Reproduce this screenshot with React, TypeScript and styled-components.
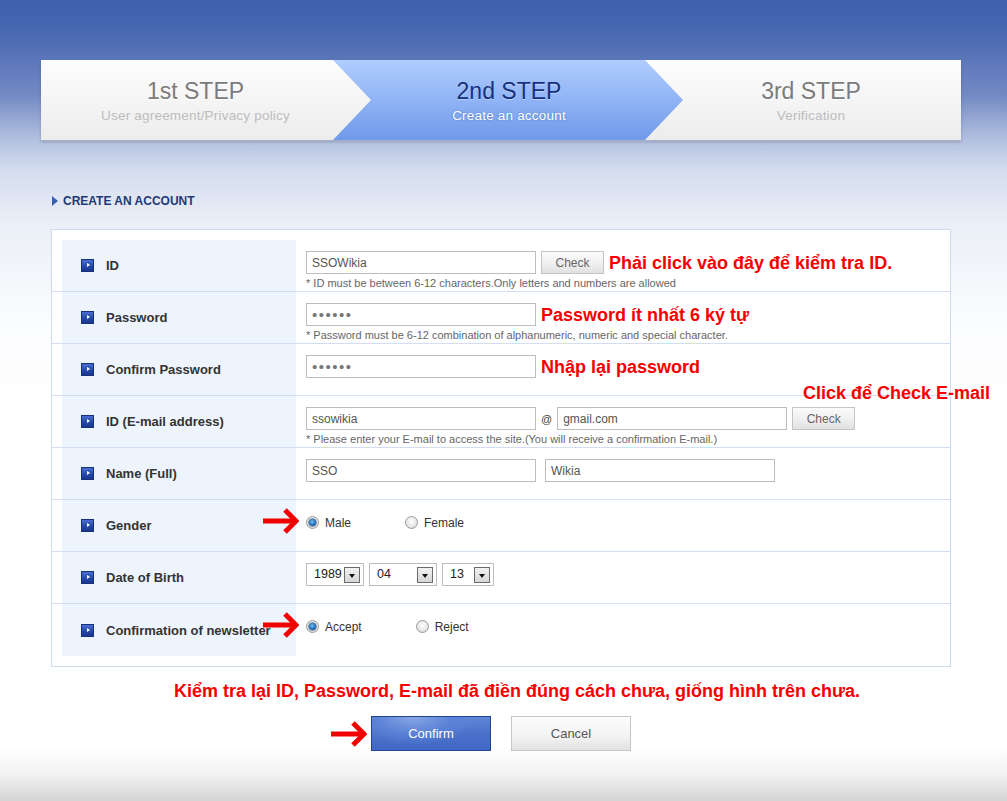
import React from "react";
import styled, { createGlobalStyle } from "styled-components";

const GlobalStyle = createGlobalStyle`
  html, body { margin: 0; padding: 0; }
  body { font-family: "Liberation Sans", Arial, sans-serif; }
  * { box-sizing: border-box; }
`;

const Page = styled.div`
  width: 1007px;
  height: 801px;
  overflow: hidden;
  padding-top: 60px;
  background: linear-gradient(
    180deg,
    #3f60ad 0px,
    #4767b1 30px,
    #7389c4 95px,
    #b3c1e0 140px,
    #d4dcee 170px,
    #ebeff7 225px,
    #fbfcfe 320px,
    #ffffff 420px,
    #ffffff 748px,
    #f1f1f1 775px,
    #d4d4d4 801px
  );
`;

const StepBar = styled.div`
  margin-left: 41px;
  width: 920px;
  height: 80px;
  display: grid;
  grid-template-columns: 292px 350px 1fr;
  background: linear-gradient(180deg, #fdfdfd 0%, #f3f3f3 60%, #ececec 100%);
  box-shadow: 0 1px 0 #a9b1c4, 0 2px 3px rgba(40, 50, 80, 0.25);
`;

const Step = styled.div<{ $pl?: number; $pr?: number }>`
  display: flex;
  flex-direction: column;
  align-items: center;
  padding-top: 18px;
  padding-left: ${(p) => p.$pl ?? 0}px;
  padding-right: ${(p) => p.$pr ?? 0}px;
`;

const ActiveStep = styled(Step)`
  clip-path: polygon(0 0, 312px 0, 350px 50%, 312px 100%, 0 100%, 38px 50%);
  background: linear-gradient(180deg, #b0cdfd 0%, #93b6f6 45%, #6f9ae9 100%);
`;

const StepTitle = styled.div<{ $active?: boolean }>`
  font-size: 23px;
  line-height: 26px;
  color: ${(p) => (p.$active ? "#17307e" : "#7b7b7b")};
  text-shadow: ${(p) => (p.$active ? "0 1px 0 rgba(255,255,255,0.35)" : "0 1px 0 #fff")};
  margin-bottom: 3px;
`;

const StepSub = styled.div<{ $active?: boolean }>`
  font-size: 13.5px;
  line-height: 17px;
  letter-spacing: 0.2px;
  color: ${(p) => (p.$active ? "#ffffff" : "#bdbdbd")};
  text-shadow: ${(p) => (p.$active ? "0 0 2px #4f74c4" : "none")};
`;

const SectionTitle = styled.div`
  margin: 54px 0 0 52px;
  display: flex;
  align-items: center;
  gap: 4px;
  font-size: 12px;
  line-height: 14px;
  font-weight: bold;
  color: #1d3a78;
`;

const FormBox = styled.div`
  margin: 21px 0 0 51px;
  width: 900px;
  border: 1px solid #cfdbf0;
  background: #ffffff;
  padding: 10px 0;
`;

const Row = styled.div<{ $last?: boolean }>`
  position: relative;
  display: flex;
  height: 52px;
  border-bottom: ${(p) => (p.$last ? "none" : "1px solid #d3def2")};
`;

const Label = styled.div`
  width: 234px;
  margin-left: 10px;
  background: #eef4fd;
  display: flex;
  align-items: center;
  gap: 12px;
  padding-left: 19px;
  font-size: 13px;
  font-weight: bold;
  color: #333333;
  white-space: nowrap;
`;

const LabelIcon = styled.span`
  width: 13px;
  height: 13px;
  flex: none;
  border: 1px solid #16307c;
  background: linear-gradient(180deg, #4a6fd0 0%, #2346a8 60%, #1a3690 100%);
  position: relative;
  &::after {
    content: "";
    position: absolute;
    left: 4.5px;
    top: 3px;
    border-left: 3px solid #ffffff;
    border-top: 2.5px solid transparent;
    border-bottom: 2.5px solid transparent;
  }
`;

const Value = styled.div`
  flex: 1;
  padding: 11px 0 0 10px;
`;

const Line = styled.div<{ $gap?: number }>`
  display: flex;
  align-items: center;
  gap: ${(p) => p.$gap ?? 5}px;
  height: 23px;
`;

const Field = styled.input<{ $w?: number; $dots?: boolean }>`
  width: ${(p) => p.$w ?? 230}px;
  height: 23px;
  border: 1px solid #bdbdbd;
  background: #fff;
  padding: 0 5px;
  font-family: "Liberation Sans", Arial, sans-serif;
  font-size: ${(p) => (p.$dots ? "15px" : "12px")};
  letter-spacing: ${(p) => (p.$dots ? "1.5px" : "0")};
  color: ${(p) => (p.$dots ? "#777" : "#555")};
  outline: none;
`;

const CheckButton = styled.button`
  width: 63px;
  height: 23px;
  border: 1px solid #c4c4c4;
  background: linear-gradient(180deg, #fbfbfb 0%, #efefef 55%, #e1e1e1 100%);
  font-family: "Liberation Sans", Arial, sans-serif;
  font-size: 12px;
  color: #666;
  padding: 0;
`;

const At = styled.span`
  font-size: 11px;
  color: #444;
`;

const Note = styled.span`
  font-size: 18px;
  font-weight: bold;
  color: #f50000;
  white-space: nowrap;
  line-height: 22px;
`;

const FloatingNote = styled(Note)`
  position: absolute;
  left: 751px;
  top: -14px;
`;

const Hint = styled.div`
  margin-top: 3px;
  font-size: 11px;
  line-height: 13px;
  color: #666;
  white-space: nowrap;
`;

const RadioGroup = styled.label`
  display: flex;
  align-items: center;
  gap: 6px;
  font-size: 12px;
  color: #333;
  margin-right: 54px;
`;

const RadioDot = styled.span<{ $on?: boolean }>`
  width: 13px;
  height: 13px;
  border-radius: 50%;
  border: 1px solid #9a9a9a;
  background: radial-gradient(circle at 50% 40%, #ffffff 0%, #e6e6e6 60%, #cfcfcf 100%);
  position: relative;
  flex: none;
  &::after {
    content: "";
    display: ${(p) => (p.$on ? "block" : "none")};
    position: absolute;
    left: 2px;
    top: 2px;
    width: 7px;
    height: 7px;
    border-radius: 50%;
    background: radial-gradient(circle at 45% 40%, #7ec3f0 0%, #2a7fc8 45%, #0c3f7e 100%);
    box-shadow: 0 0 0 0.5px #1c3a66;
  }
`;

const SelectBox = styled.div<{ $w: number }>`
  position: relative;
  width: ${(p) => p.$w}px;
  height: 23px;
  border: 1px solid #bdbdbd;
  background: #fff;
  font-size: 12.5px;
  line-height: 21px;
  color: #222;
  padding-left: 7px;
`;

const SelectArrow = styled.span`
  position: absolute;
  right: 3px;
  top: 3px;
  width: 16px;
  height: 16px;
  border: 1px solid #6b6b6b;
  background: linear-gradient(180deg, #f2f2f2, #d6d6d6);
  &::after {
    content: "";
    position: absolute;
    left: 3.5px;
    top: 5.5px;
    border-top: 4px solid #111;
    border-left: 3.5px solid transparent;
    border-right: 3.5px solid transparent;
  }
`;

const ArrowMark = styled.svg<{ $left: number; $top: number }>`
  position: absolute;
  left: ${(p) => p.$left}px;
  top: ${(p) => p.$top}px;
`;

const BottomNote = styled.div`
  margin: 13px 0 0 51px;
  width: 900px;
  padding-left: 32px;
  text-align: center;
  font-size: 18px;
  line-height: 22px;
  font-weight: bold;
  color: #f50000;
  white-space: nowrap;
`;

const ButtonRow = styled.div`
  margin: 14px 0 0 371px;
  display: flex;
  gap: 20px;
`;

const ButtonWrap = styled.div`
  position: relative;
`;

const BigButton = styled.button<{ $primary?: boolean }>`
  width: 120px;
  height: 35px;
  padding: 0;
  font-family: "Liberation Sans", Arial, sans-serif;
  font-size: 13px;
  border: 1px solid ${(p) => (p.$primary ? "#23448f" : "#c6c6c6")};
  color: ${(p) => (p.$primary ? "#ffffff" : "#555555")};
  background: ${(p) =>
    p.$primary
      ? "radial-gradient(ellipse at 35% 0%, #88a7e6 0%, #5b82d6 35%, transparent 60%), linear-gradient(180deg, #5f86d8 0%, #4a71c9 50%, #4169c5 100%)"
      : "linear-gradient(180deg, #fdfdfd 0%, #f2f2f2 60%, #e2e2e2 100%)"};
`;

const Arrow = ({ left, top }: { left: number; top: number }) => (
  <ArrowMark $left={left} $top={top} width="36" height="26" viewBox="0 0 36 26">
    <rect x="0" y="10.5" width="30" height="5" fill="#f00000" />
    <polyline points="22,2 33,13 22,24" fill="none" stroke="#f00000" strokeWidth="5" strokeLinejoin="miter" />
  </ArrowMark>
);

const Select = ({ value, w }: { value: string; w: number }) => (
  <SelectBox $w={w}>
    {value}
    <SelectArrow />
  </SelectBox>
);

const FieldLabel = ({ children }: { children: React.ReactNode }) => (
  <Label>
    <LabelIcon />
    {children}
  </Label>
);

export default function App() {
  return (
    <Page>
      <GlobalStyle />
      <StepBar>
        <Step $pl={17}>
          <StepTitle>1st STEP</StepTitle>
          <StepSub>User agreement/Privacy policy</StepSub>
        </Step>
        <ActiveStep $pl={2}>
          <StepTitle $active>2nd STEP</StepTitle>
          <StepSub $active>Create an account</StepSub>
        </ActiveStep>
        <Step $pr={22}>
          <StepTitle>3rd STEP</StepTitle>
          <StepSub>Verification</StepSub>
        </Step>
      </StepBar>

      <SectionTitle>
        <svg width="7" height="10" viewBox="0 0 7 10">
          <polygon points="0,0 6,5 0,10" fill="#3d5fb0" />
        </svg>
        CREATE AN ACCOUNT
      </SectionTitle>

      <FormBox>
        <Row>
          <FieldLabel>ID</FieldLabel>
          <Value>
            <Line>
              <Field readOnly value="SSOWikia" />
              <CheckButton>Check</CheckButton>
              <Note>Phải click vào đây để kiểm tra ID.</Note>
            </Line>
            <Hint>* ID must be between 6-12 characters.Only letters and numbers are allowed</Hint>
          </Value>
        </Row>
        <Row>
          <FieldLabel>Password</FieldLabel>
          <Value>
            <Line>
              <Field readOnly $dots value="••••••" />
              <Note>Password ít nhất 6 ký tự</Note>
            </Line>
            <Hint>* Password must be 6-12 combination of alphanumeric, numeric and special character.</Hint>
          </Value>
        </Row>
        <Row>
          <FieldLabel>Confirm Password</FieldLabel>
          <Value>
            <Line>
              <Field readOnly $dots value="••••••" />
              <Note>Nhập lại password</Note>
            </Line>
          </Value>
        </Row>
        <Row>
          <FieldLabel>ID (E-mail address)</FieldLabel>
          <Value>
            <Line>
              <Field readOnly value="ssowikia" />
              <At>@</At>
              <Field readOnly value="gmail.com" />
              <CheckButton>Check</CheckButton>
            </Line>
            <Hint>* Please enter your E-mail to access the site.(You will receive a confirmation E-mail.)</Hint>
          </Value>
          <FloatingNote>Click để Check E-mail</FloatingNote>
        </Row>
        <Row>
          <FieldLabel>Name (Full)</FieldLabel>
          <Value>
            <Line $gap={9}>
              <Field readOnly value="SSO" />
              <Field readOnly value="Wikia" />
            </Line>
          </Value>
        </Row>
        <Row>
          <FieldLabel>Gender</FieldLabel>
          <Value>
            <Line $gap={0}>
              <RadioGroup>
                <RadioDot $on />
                Male
              </RadioGroup>
              <RadioGroup>
                <RadioDot />
                Female
              </RadioGroup>
            </Line>
          </Value>
          <Arrow left={211} top={8} />
        </Row>
        <Row>
          <FieldLabel>Date of Birth</FieldLabel>
          <Value>
            <Line>
              <Select value="1989" w={58} />
              <Select value="04" w={68} />
              <Select value="13" w={52} />
            </Line>
          </Value>
        </Row>
        <Row $last>
          <FieldLabel>Confirmation of newsletter</FieldLabel>
          <Value>
            <Line $gap={0}>
              <RadioGroup>
                <RadioDot $on />
                Accept
              </RadioGroup>
              <RadioGroup>
                <RadioDot />
                Reject
              </RadioGroup>
            </Line>
          </Value>
          <Arrow left={211} top={8} />
        </Row>
      </FormBox>

      <BottomNote>Kiểm tra lại ID, Password, E-mail đã điền đúng cách chưa, giống hình trên chưa.</BottomNote>

      <ButtonRow>
        <ButtonWrap>
          <Arrow left={-40} top={5} />
          <BigButton $primary>Confirm</BigButton>
        </ButtonWrap>
        <ButtonWrap>
          <BigButton>Cancel</BigButton>
        </ButtonWrap>
      </ButtonRow>
    </Page>
  );
}
